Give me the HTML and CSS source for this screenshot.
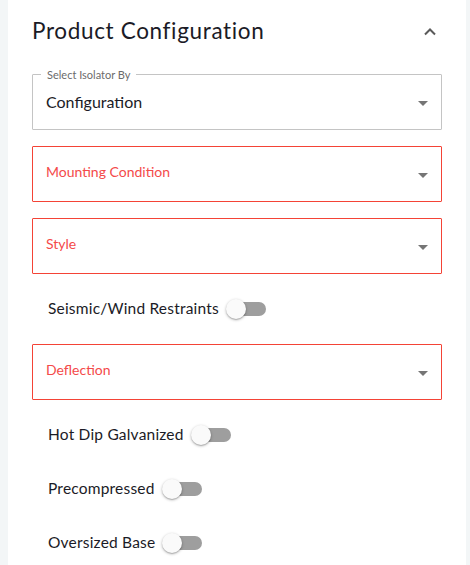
FILE: index.html
```html
<!DOCTYPE html>
<html>
<head>
<meta charset="utf-8">
<link rel="stylesheet" href="styles.css">
</head>
<body>
<div class="card">
  <div class="header">
    <h2 class="title">Product Configuration</h2>
    <svg class="chevron" width="14" height="9" viewBox="0 0 14 9"><path d="M2 7.5 L7 2.5 L12 7.5" fill="none" stroke="#5a5a5a" stroke-width="2"/></svg>
  </div>
  <div class="form">
    <div class="select">
      <span class="floating">Select Isolator By</span>
      <span class="value">Configuration</span>
      <span class="arrow"></span>
    </div>
    <div class="select error">
      <span class="placeholder">Mounting Condition</span>
      <span class="arrow"></span>
    </div>
    <div class="select error">
      <span class="placeholder">Style</span>
      <span class="arrow"></span>
    </div>
    <div class="toggle-row">
      <span class="toggle-label">Seismic/Wind Restraints</span>
      <span class="switch"><span class="track"></span><span class="thumb"></span></span>
    </div>
    <div class="select error">
      <span class="placeholder">Deflection</span>
      <span class="arrow"></span>
    </div>
    <div class="toggle-row">
      <span class="toggle-label">Hot Dip Galvanized</span>
      <span class="switch"><span class="track"></span><span class="thumb"></span></span>
    </div>
    <div class="toggle-row">
      <span class="toggle-label">Precompressed</span>
      <span class="switch"><span class="track"></span><span class="thumb"></span></span>
    </div>
    <div class="toggle-row">
      <span class="toggle-label">Oversized Base</span>
      <span class="switch"><span class="track"></span><span class="thumb"></span></span>
    </div>
  </div>
</div>
</body>
</html>
```
FILE: styles.css
```css
html, body {
  margin: 0;
  padding: 0;
  background: #f3f6f7;
  font-family: Lato, "Liberation Sans", sans-serif;
}
.card {
  margin: 0 4px 0 8px;
  background: #ffffff;
  min-height: 565px;
  padding: 16px 24px 0 24px;
  box-sizing: border-box;
}
.header {
  display: flex;
  align-items: center;
  justify-content: space-between;
  height: 30px;
  padding-right: 5px;
}
.title {
  margin: -2px 0 0 0;
  font-size: 22.5px;
  font-weight: 400;
  color: #1b1b26;
  letter-spacing: 0.65px;
}
.chevron {
  display: block;
}
.form {
  margin-top: 28px;
  display: flex;
  flex-direction: column;
  gap: 16px;
}
.select {
  position: relative;
  height: 56px;
  box-sizing: border-box;
  border: 1px solid #c4c4c4;
  border-radius: 1px;
  display: flex;
  align-items: center;
  padding: 0 13px;
}
.select.error {
  border-color: #f44336;
}
.floating {
  position: absolute;
  top: -7px;
  left: 8px;
  padding: 0 6px;
  background: #fff;
  font-size: 11px;
  line-height: 13px;
  color: #6b6b6b;
}
.value {
  font-size: 16px;
  color: #1b1b26;
  flex: 1;
  margin-top: -2px;
}
.placeholder {
  font-size: 14px;
  color: #f44a4a;
  flex: 1;
  margin-top: -5px;
}
.arrow {
  width: 0;
  height: 0;
  border-left: 5px solid transparent;
  border-right: 5px solid transparent;
  border-top: 5px solid #757575;
  margin-top: 2px;
}
.toggle-row {
  height: 38px;
  display: flex;
  align-items: center;
  padding-left: 16px;
  gap: 7px;
}
.toggle-label {
  font-size: 15.5px;
  color: #1b1b26;
  letter-spacing: 0.2px;
  margin-top: -2px;
}
.switch {
  position: relative;
  width: 40px;
  height: 20px;
  display: inline-block;
}
.track {
  position: absolute;
  left: 3px;
  right: 0;
  top: 3px;
  height: 14px;
  border-radius: 7px;
  background: #9e9e9e;
}
.thumb {
  position: absolute;
  left: 0;
  top: 0;
  width: 20px;
  height: 20px;
  border-radius: 50%;
  background: #fafafa;
  box-shadow: 0 1px 3px rgba(0,0,0,0.3), 0 1px 1px rgba(0,0,0,0.14);
}
```
